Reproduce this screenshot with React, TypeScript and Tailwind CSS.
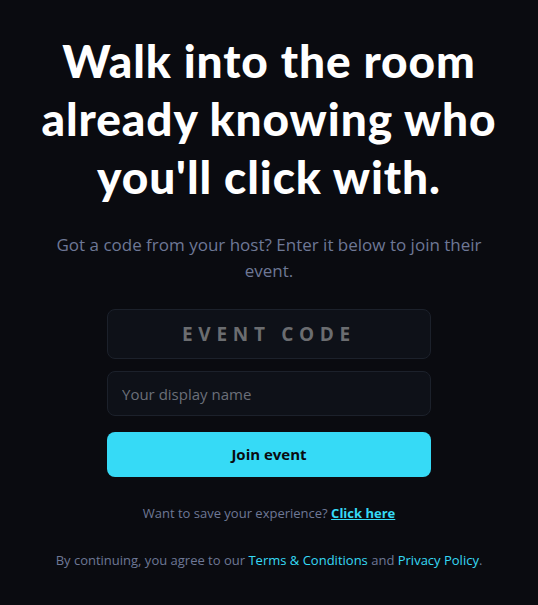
import React from "react";

export default function App() {
  return (
    <div className="min-h-screen w-full bg-[#0a0b10] flex flex-col items-center px-4 pt-[32px] font-['Open_Sans',sans-serif]">
      <h1 className="text-center text-white font-black text-[46px] leading-[58px] tracking-[0.02em] max-w-[510px] font-['Lato',sans-serif]">
        Walk into the room already knowing who you'll click with.
      </h1>
      <p className="mt-[26px] text-center text-[#6e7896] text-[17px] leading-[26px] max-w-[450px]">
        Got a code from your host? Enter it below to join their event.
      </p>
      <form className="mt-[25px] w-[324px] flex flex-col gap-3" onSubmit={(e) => e.preventDefault()}>
        <input
          placeholder="EVENT CODE"
          className="h-[50px] w-full rounded-lg border border-[#1c212b] bg-[#0e1118] text-center text-[19px] font-bold tracking-[0.3em] text-white placeholder:text-[#6b6d70] outline-none"
        />
        <input
          placeholder="Your display name"
          className="h-[45px] w-full rounded-lg border border-[#1c212b] bg-[#0e1118] px-[14px] text-[15px] text-white placeholder:text-[#6b6f78] outline-none"
        />
        <button className="mt-1 h-[45px] w-full rounded-lg bg-[#36daf6] text-[15px] font-bold text-[#0a0b10]">
          Join event
        </button>
      </form>
      <p className="mt-[27px] text-[13px] text-[#6e7896]">
        Want to save your experience?{" "}
        <a href="#" className="font-bold text-[#36daf6] underline">
          Click here
        </a>
      </p>
      <p className="mt-[27px] text-[13px] text-[#6e7896]">
        By continuing, you agree to our{" "}
        <a href="#" className="text-[#36daf6]">Terms &amp; Conditions</a> and{" "}
        <a href="#" className="text-[#36daf6]">Privacy Policy</a>.
      </p>
    </div>
  );
}
